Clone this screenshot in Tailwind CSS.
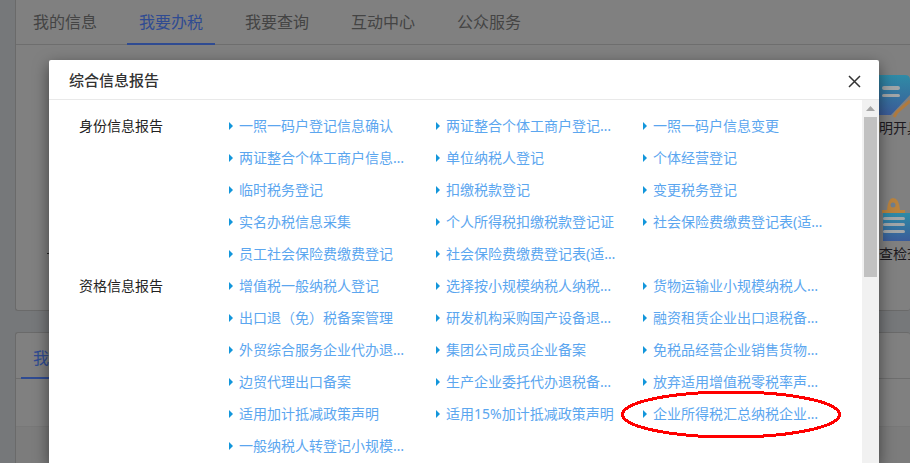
<!doctype html>
<html lang="zh-CN">
<head>
<meta charset="utf-8">
<script src="https://cdn.jsdelivr.net/npm/@tailwindcss/browser@4"></script>
</head>
<body class="m-0 overflow-hidden bg-[#76787a] font-['Noto_Sans','Noto_Sans_CJK_SC',sans-serif]">
<div class="relative h-[463px] w-[910px] overflow-hidden">

  <!-- dimmed page -->
  <div class="flex h-full flex-col pl-[15px]">
    <section class="relative h-[311px] shrink-0 rounded-b-[3px] border-b border-l border-[#6a6a6a] bg-[#808080]">
      <nav class="flex h-[45px] border-b border-[#6e6e6e] pl-[5px] text-[16px] leading-[44px] text-[#444]">
        <span class="mr-[18px] w-[88px] text-center">我的信息</span>
        <span class="mr-[18px] h-[45px] w-[88px] border-b-2 border-[#2f4b92] text-center text-[#2f4b92]">我要办税</span>
        <span class="mr-[18px] w-[88px] text-center">我要查询</span>
        <span class="mr-[18px] w-[88px] text-center">互动中心</span>
        <span class="w-[88px] text-center">公众服务</span>
      </nav>
      <div class="ml-[863px] flex w-[31px] flex-col overflow-hidden pt-[30px] text-[14px] leading-[20px] text-[#1d1a20]">
        <svg class="shrink-0" width="31" height="43" viewBox="0 0 31 43">
          <defs><linearGradient id="a" x1="0" y1="0" x2="0" y2="1"><stop offset="0" stop-color="#2f8ba6"/><stop offset="1" stop-color="#3b5c99"/></linearGradient></defs>
          <path d="M0 0H26Q31 0 31 5V20L12 40H0Z" fill="url(#a)"/>
          <rect x="3" y="11" width="18" height="4" rx="2" fill="#a2a6a8"/>
          <rect x="3" y="19" width="18" height="3" rx="1.5" fill="#a2a6a8"/>
          <path d="M15 42L18 37L31 26" fill="none" stroke="#b07a3e" stroke-width="3"/>
        </svg>
        <span class="whitespace-nowrap">明开具</span>
        <svg class="mt-[60px] shrink-0" width="31" height="43" viewBox="0 0 31 43">
          <path d="M3 15V12H8Q9 0 14 0Q20 0 21 12H26V15Z" fill="#b9833f"/>
          <circle cx="14" cy="7" r="2.5" fill="#6f7f90"/>
          <path d="M4 15H31V43H4Z" fill="url(#a)"/>
          <rect x="4" y="19" width="22" height="3" rx="1.5" fill="#a2a6a8"/>
          <rect x="4" y="25" width="22" height="3" rx="1.5" fill="#a2a6a8"/>
          <rect x="4" y="32" width="22" height="3" rx="1.5" fill="#a2a6a8"/>
        </svg>
        <span class="mt-[3px] whitespace-nowrap">查检查</span>
      </div>
      <span class="absolute left-[31px] top-[253px] h-px w-[3px] bg-[#222]"></span>
    </section>
    <section class="mt-[21px] flex-1 rounded-t-[3px] border-l border-t border-[#6a6a6a] bg-[#808080]">
      <nav class="flex h-[46px] border-b border-[#6e6e6e] pl-[5px] text-[16px] leading-[50px] text-[#2f4b92]">
        <span class="h-[46px] w-[88px] border-b-2 border-[#2f4b92] pl-3">我的待办</span>
      </nav>
      <div class="mt-[47px] h-full border-t border-[#787878] bg-[#7c7c7c]"></div>
    </section>
  </div>

  <!-- modal -->
  <div class="absolute left-[49px] top-[60px] flex h-[403px] w-[830px] flex-col rounded-t-[2px] bg-white shadow-[0_5px_15px_rgba(0,0,0,0.5)]">
    <header class="flex h-[40px] shrink-0 items-center justify-between border-b border-[#e9e9e9] pl-[20px] pr-[18px]">
      <h2 class="text-[15px] font-medium leading-[40px] text-[#333]">综合信息报告</h2>
      <svg class="mt-[3px]" width="13" height="13" viewBox="0 0 13 13"><path d="M1 1L12 12M12 1L1 12" stroke="#333" stroke-width="1.5"/></svg>
    </header>
    <div class="flex min-h-0 flex-1">
      <main class="min-w-0 flex-1 pl-[30px] pt-[10px] text-[14px] leading-[32px]">

        <div class="flex">
          <h3 class="w-[150px] shrink-0 font-normal text-[#222]">身份信息报告</h3>
          <ul class="grid grid-cols-[207px_207px_207px] text-[#5ba6ef]">
            <li class="flex items-center"><i class="mr-[6px] h-0 w-0 shrink-0 border-y-[4px] border-l-[4px] border-y-transparent border-l-[#1296db]"></i><span class="w-[170px] truncate">一照一码户登记信息确认</span></li>
            <li class="flex items-center"><i class="mr-[6px] h-0 w-0 shrink-0 border-y-[4px] border-l-[4px] border-y-transparent border-l-[#1296db]"></i><span class="w-[170px] truncate">两证整合个体工商户登记信息确认</span></li>
            <li class="flex items-center"><i class="mr-[6px] h-0 w-0 shrink-0 border-y-[4px] border-l-[4px] border-y-transparent border-l-[#1296db]"></i><span class="w-[170px] truncate">一照一码户信息变更</span></li>
            <li class="flex items-center"><i class="mr-[6px] h-0 w-0 shrink-0 border-y-[4px] border-l-[4px] border-y-transparent border-l-[#1296db]"></i><span class="w-[170px] truncate">两证整合个体工商户信息变更</span></li>
            <li class="flex items-center"><i class="mr-[6px] h-0 w-0 shrink-0 border-y-[4px] border-l-[4px] border-y-transparent border-l-[#1296db]"></i><span class="w-[170px] truncate">单位纳税人登记</span></li>
            <li class="flex items-center"><i class="mr-[6px] h-0 w-0 shrink-0 border-y-[4px] border-l-[4px] border-y-transparent border-l-[#1296db]"></i><span class="w-[170px] truncate">个体经营登记</span></li>
            <li class="flex items-center"><i class="mr-[6px] h-0 w-0 shrink-0 border-y-[4px] border-l-[4px] border-y-transparent border-l-[#1296db]"></i><span class="w-[170px] truncate">临时税务登记</span></li>
            <li class="flex items-center"><i class="mr-[6px] h-0 w-0 shrink-0 border-y-[4px] border-l-[4px] border-y-transparent border-l-[#1296db]"></i><span class="w-[170px] truncate">扣缴税款登记</span></li>
            <li class="flex items-center"><i class="mr-[6px] h-0 w-0 shrink-0 border-y-[4px] border-l-[4px] border-y-transparent border-l-[#1296db]"></i><span class="w-[170px] truncate">变更税务登记</span></li>
            <li class="flex items-center"><i class="mr-[6px] h-0 w-0 shrink-0 border-y-[4px] border-l-[4px] border-y-transparent border-l-[#1296db]"></i><span class="w-[170px] truncate">实名办税信息采集</span></li>
            <li class="flex items-center"><i class="mr-[6px] h-0 w-0 shrink-0 border-y-[4px] border-l-[4px] border-y-transparent border-l-[#1296db]"></i><span class="w-[170px] truncate">个人所得税扣缴税款登记证</span></li>
            <li class="flex items-center"><i class="mr-[6px] h-0 w-0 shrink-0 border-y-[4px] border-l-[4px] border-y-transparent border-l-[#1296db]"></i><span class="w-[170px] truncate">社会保险费缴费登记表(适用于单位)</span></li>
            <li class="flex items-center"><i class="mr-[6px] h-0 w-0 shrink-0 border-y-[4px] border-l-[4px] border-y-transparent border-l-[#1296db]"></i><span class="w-[170px] truncate">员工社会保险费缴费登记</span></li>
            <li class="flex items-center"><i class="mr-[6px] h-0 w-0 shrink-0 border-y-[4px] border-l-[4px] border-y-transparent border-l-[#1296db]"></i><span class="w-[170px] truncate">社会保险费缴费登记表(适用于个人)</span></li>
          </ul>
        </div>

        <div class="flex">
          <h3 class="w-[150px] shrink-0 font-normal text-[#222]">资格信息报告</h3>
          <ul class="grid grid-cols-[207px_207px_207px] text-[#5ba6ef]">
            <li class="flex items-center"><i class="mr-[6px] h-0 w-0 shrink-0 border-y-[4px] border-l-[4px] border-y-transparent border-l-[#1296db]"></i><span class="w-[170px] truncate">增值税一般纳税人登记</span></li>
            <li class="flex items-center"><i class="mr-[6px] h-0 w-0 shrink-0 border-y-[4px] border-l-[4px] border-y-transparent border-l-[#1296db]"></i><span class="w-[170px] truncate">选择按小规模纳税人纳税的情况说明</span></li>
            <li class="flex items-center"><i class="mr-[6px] h-0 w-0 shrink-0 border-y-[4px] border-l-[4px] border-y-transparent border-l-[#1296db]"></i><span class="w-[170px] truncate">货物运输业小规模纳税人异地代开</span></li>
            <li class="flex items-center"><i class="mr-[6px] h-0 w-0 shrink-0 border-y-[4px] border-l-[4px] border-y-transparent border-l-[#1296db]"></i><span class="w-[170px] truncate">出口退（免）税备案管理</span></li>
            <li class="flex items-center"><i class="mr-[6px] h-0 w-0 shrink-0 border-y-[4px] border-l-[4px] border-y-transparent border-l-[#1296db]"></i><span class="w-[170px] truncate">研发机构采购国产设备退税备案</span></li>
            <li class="flex items-center"><i class="mr-[6px] h-0 w-0 shrink-0 border-y-[4px] border-l-[4px] border-y-transparent border-l-[#1296db]"></i><span class="w-[170px] truncate">融资租赁企业出口退税备案管理</span></li>
            <li class="flex items-center"><i class="mr-[6px] h-0 w-0 shrink-0 border-y-[4px] border-l-[4px] border-y-transparent border-l-[#1296db]"></i><span class="w-[170px] truncate">外贸综合服务企业代办退税备案</span></li>
            <li class="flex items-center"><i class="mr-[6px] h-0 w-0 shrink-0 border-y-[4px] border-l-[4px] border-y-transparent border-l-[#1296db]"></i><span class="w-[170px] truncate">集团公司成员企业备案</span></li>
            <li class="flex items-center"><i class="mr-[6px] h-0 w-0 shrink-0 border-y-[4px] border-l-[4px] border-y-transparent border-l-[#1296db]"></i><span class="w-[170px] truncate">免税品经营企业销售货物退税备案</span></li>
            <li class="flex items-center"><i class="mr-[6px] h-0 w-0 shrink-0 border-y-[4px] border-l-[4px] border-y-transparent border-l-[#1296db]"></i><span class="w-[170px] truncate">边贸代理出口备案</span></li>
            <li class="flex items-center"><i class="mr-[6px] h-0 w-0 shrink-0 border-y-[4px] border-l-[4px] border-y-transparent border-l-[#1296db]"></i><span class="w-[170px] truncate">生产企业委托代办退税备案管理</span></li>
            <li class="flex items-center"><i class="mr-[6px] h-0 w-0 shrink-0 border-y-[4px] border-l-[4px] border-y-transparent border-l-[#1296db]"></i><span class="w-[170px] truncate">放弃适用增值税零税率声明管理</span></li>
            <li class="flex items-center"><i class="mr-[6px] h-0 w-0 shrink-0 border-y-[4px] border-l-[4px] border-y-transparent border-l-[#1296db]"></i><span class="w-[170px] truncate">适用加计抵减政策声明</span></li>
            <li class="flex items-center"><i class="mr-[6px] h-0 w-0 shrink-0 border-y-[4px] border-l-[4px] border-y-transparent border-l-[#1296db]"></i><span class="w-[170px] truncate">适用15%加计抵减政策声明</span></li>
            <li class="flex items-center"><i class="mr-[6px] h-0 w-0 shrink-0 border-y-[4px] border-l-[4px] border-y-transparent border-l-[#1296db]"></i><span class="w-[170px] truncate">企业所得税汇总纳税企业信息报告</span></li>
            <li class="flex items-center"><i class="mr-[6px] h-0 w-0 shrink-0 border-y-[4px] border-l-[4px] border-y-transparent border-l-[#1296db]"></i><span class="w-[170px] truncate">一般纳税人转登记小规模纳税人</span></li>
          </ul>
        </div>
      </main>

      <!-- scrollbar -->
      <div class="flex w-[17px] shrink-0 flex-col items-center bg-[#f1f1f1]">
        <svg class="mt-[6px] shrink-0" width="9" height="5" viewBox="0 0 9 5"><path d="M4.5 0L9 5H0Z" fill="#a6a6a6"/></svg>
        <div class="mt-[6px] h-[160px] w-[13px] bg-[#c1c1c1]"></div>
      </div>
    </div>

    <!-- hand-drawn annotation -->
    <svg class="absolute left-[570px] top-[329px]" width="225" height="52" viewBox="0 0 225 52" shape-rendering="crispEdges">
      <ellipse cx="112" cy="25.5" rx="108.5" ry="22.5" fill="none" stroke="#ff0000" stroke-width="3"/>
    </svg>
  </div>
</div>
</body>
</html>
